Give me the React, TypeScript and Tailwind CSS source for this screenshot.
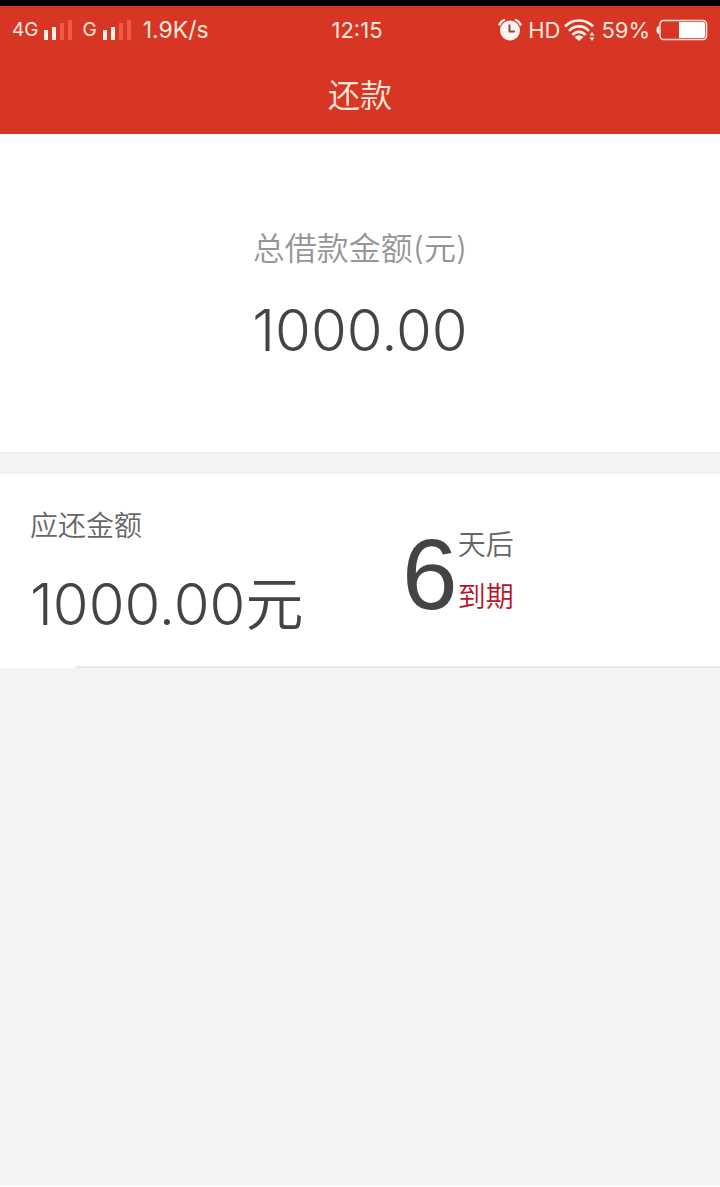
type Bar = { height: number; active: boolean };

const bars: Bar[] = [
  { height: 10, active: true },
  { height: 13, active: true },
  { height: 17, active: false },
  { height: 20, active: false },
];

function Signal() {
  return (
    <svg viewBox="0 0 28 20" className="h-5 w-7" aria-hidden="true">
      {bars.map((bar, i) => (
        <rect
          key={bar.height}
          x={i * 8}
          y={20 - bar.height}
          width="4"
          height={bar.height}
          fill={bar.active ? "#fff0e6" : "#ee5948"}
        />
      ))}
    </svg>
  );
}

function AlarmIcon() {
  return (
    <svg viewBox="0 0 24 24" className="size-6" fill="none" aria-hidden="true">
      <circle cx="12" cy="12.500" r="10" fill="#fff4ee" />
      <path d="M1.500 6.500A8 8 0 0 1 6 2M18 2a8 8 0 0 1 4.500 4.500" stroke="#fff4ee" strokeWidth="2.400" strokeLinecap="round" />
      <path d="M11.500 6.500v7h5.500" stroke="#8c4a3c" strokeWidth="2" />
    </svg>
  );
}

function WifiIcon() {
  return (
    <svg viewBox="0 0 31 24" className="h-6 w-[31px]" fill="none" aria-hidden="true">
      <g stroke="#fff0e6" strokeWidth="2.600">
        <path d="M1 8.500C8.500 0.500 21.500 0.500 29 8.500" />
        <path d="M5 13C10.500 6.800 19.500 6.800 25 13" />
        <path d="M8.500 17C12 12.800 18 12.800 21.500 17" />
      </g>
      <path d="M10.500 19Q15 15.500 19.500 19L15 23Z" fill="#fff0e6" />
      <path d="M25.500 17.500L28 14L30.500 17.500ZM25.500 19.500H30.500L28 23Z" fill="#fff0e6" />
    </svg>
  );
}

function BatteryIcon() {
  return (
    <svg viewBox="0 0 52 22" className="h-[22px] w-[52px]" fill="none" aria-hidden="true">
      <path d="M3 7Q0.500 7 0.500 11Q0.500 15 3 15Z" fill="#fff0e6" />
      <rect x="4" y="1.500" width="46.500" height="19" rx="3.500" stroke="#ffe3d8" strokeWidth="1.600" />
      <path d="M23 3H47Q49 3 49 5V17Q49 19 47 19H23Z" fill="#fff" />
    </svg>
  );
}

export default function App() {
  return (
    <div className="flex min-h-screen flex-col border-t-6 border-b-2 border-t-black border-b-[#fafafa] bg-[#f3f3f3] font-['Inter','Noto_Sans_CJK_SC',sans-serif] text-[#444]">
      <header className="bg-[#d83625] text-[#ffe9df]">
        <div className="grid h-12 grid-cols-[1fr_auto_1fr] items-center px-3 text-[22px] leading-8">
          <div className="flex items-center">
            <span className="text-[19px]">4G</span>
            <span className="ml-1.5"><Signal /></span>
            <span className="ml-2.5 text-[19px]">G</span>
            <span className="ml-1.5"><Signal /></span>
            <span className="ml-3 text-[23px]">1.9K/s</span>
          </div>
          <time className="pr-1.5">12:15</time>
          <div className="flex items-center justify-end">
            <AlarmIcon />
            <span className="ml-1.5">HD</span>
            <span className="ml-1"><WifiIcon /></span>
            <span className="mx-1.5">59%</span>
            <BatteryIcon />
          </div>
        </div>
        <h1 className="h-20 pt-[18px] text-center text-[32px] leading-12 font-[350]">还款</h1>
      </header>
      <main>
        <section className="flex flex-col items-center border-b-2 border-[#ededed] bg-white pt-[91px] pb-[85px]">
          <h2 className="text-[32px] leading-12 font-[350] text-[#969696]">总借款金额(元)</h2>
          <p className="mt-5 text-[58px] leading-[74px] font-[350]">1000.00</p>
        </section>
        <section className="mt-5 bg-white">
          <div className="flex items-start pt-8 pl-[30px]">
            <div className="w-[372px]">
              <h2 className="pt-0.5 text-[28px] leading-9 font-[350] text-[#666]">应还金额</h2>
              <p className="mt-6 text-[58px] leading-[72px] font-[350]">1000.00元</p>
            </div>
            <div className="flex items-center">
              <span className="font-['Liberation_Sans',sans-serif] text-[100px] leading-[136px]">6</span>
              <p className="flex flex-col gap-4 pb-1.5 text-[28px] leading-9 font-[350] text-[#666]">
                <span>天后</span>
                <span className="text-[#b5162d]">到期</span>
              </p>
            </div>
          </div>
          <hr className="mt-6 ml-[76px] border-t-2 border-[#e6e7e7]" />
        </section>
      </main>
    </div>
  );
}
